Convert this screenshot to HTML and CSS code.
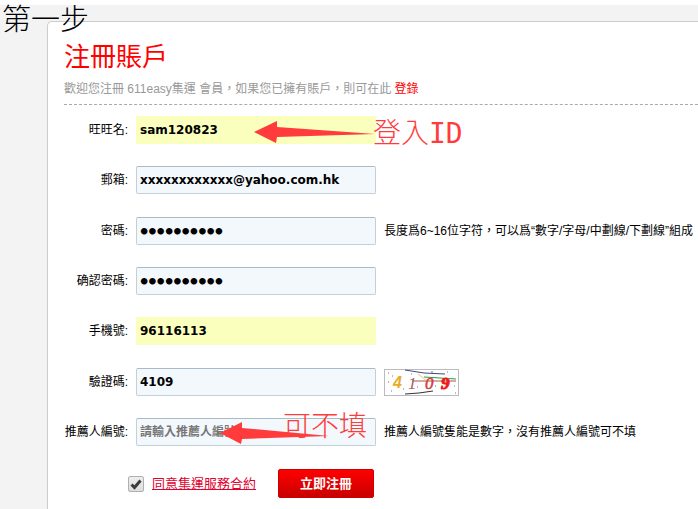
FILE: index.html
```html
<!DOCTYPE html>
<html lang="zh-Hant">
<head>
<meta charset="utf-8">
<meta name="viewport" content="width=device-width, initial-scale=1">
<title>注冊賬戶</title>
<link rel="stylesheet" href="styles.css">
</head>
<body>
<main class="page">
  <section class="panel">
    <header class="intro">
      <h1 class="title">注冊賬戶</h1>
      <p class="welcome">歡迎您注冊 611easy集運 會員，如果您已擁有賬戶，則可在此 <a class="login" href="#login">登錄</a></p>
    </header>
    <form class="form">
      <div class="group">
        <div class="row">
          <label class="label" for="user">旺旺名:</label>
          <div class="control">
            <input class="field filled" id="user" type="text" value="sam120823">
            <div class="note note-id">
              <svg class="arrow" viewBox="0 0 121 22" aria-hidden="true"><path d="M0 11 23 0V6L121 13 23 16 22 22Z"/></svg>
              <span class="note-text">登入<span class="latin">ID</span></span>
            </div>
          </div>
        </div>
        <div class="row">
          <label class="label" for="email">郵箱:</label>
          <div class="control"><input class="field" id="email" type="text" value="xxxxxxxxxxxx@yahoo.com.hk"></div>
        </div>
      </div>
      <div class="group">
        <div class="row">
          <label class="label" for="pass">密碼:</label>
          <div class="control"><input class="field secret" id="pass" type="password" value="0123456789"></div>
          <span class="hint">長度爲6~16位字符，可以爲“數字/字母/中劃線/下劃線”組成</span>
        </div>
        <div class="row">
          <label class="label" for="pass2">确認密碼:</label>
          <div class="control"><input class="field secret" id="pass2" type="password" value="0123456789"></div>
        </div>
        <div class="row">
          <label class="label" for="phone">手機號:</label>
          <div class="control"><input class="field filled" id="phone" type="text" value="96116113"></div>
        </div>
      </div>
      <div class="group">
        <div class="row">
          <label class="label" for="code">驗證碼:</label>
          <div class="control"><input class="field" id="code" type="text" value="4109"></div>
          <svg class="captcha" viewBox="0 0 75 27" role="img" aria-label="4109">
            <rect x=".5" y=".5" width="74" height="26" fill="#fff" stroke="#bbb"/>
            <g fill="none">
              <path d="M21 1 40 4 61 5" stroke="#448"/>
              <path d="M40 8 72 10" stroke="#393"/>
              <path d="M28 12 72 12" stroke="#a55"/>
              <path d="M34 5 43 12" stroke="#dc7"/>
              <path d="M21 25 35 24 49 22" stroke="#333"/>
              <path d="M47 3h2M8 7h1M4 13h1M7 22h1M57 20h1M70 17h1M63 3h1M27 5h1M33 18h1M51 17h1M71 24h1M19 20h1M4 4h1" stroke="#777"/>
            </g>
            <g font-family="Liberation Serif, serif" font-size="17" font-style="italic">
              <text x="9" y="19" fill="#e5ad28" font-family="Liberation Sans, sans-serif" font-size="16" font-weight="bold">4</text>
              <text x="24" y="20" fill="#a56060">1</text>
              <text x="41" y="20" fill="#d63a3a" stroke="#d63a3a" stroke-width=".5">0</text>
              <text x="57" y="20" fill="#f01818" stroke="#f01818" font-weight="bold">9</text>
            </g>
          </svg>
        </div>
        <div class="row">
          <label class="label" for="ref">推薦人編號:</label>
          <div class="control">
            <input class="field" id="ref" type="text" placeholder="請輸入推薦人編號">
            <div class="note note-skip">
              <svg class="arrow" viewBox="0 0 121 22" aria-hidden="true"><path d="M0 11 22 0V6L109 14 22 17 21 22Z"/></svg>
              <span class="note-text">可不填</span>
            </div>
          </div>
          <span class="hint">推薦人編號隻能是數字，沒有推薦人編號可不填</span>
        </div>
      </div>
      <div class="actions">
        <span class="tick">
          <input class="box" id="agree" type="checkbox" checked aria-label="同意集運服務合約">
          <svg class="mark" viewBox="0 0 16 16" aria-hidden="true"><path d="M3.5 8.5 6.5 11.5 12.5 4.5" fill="none" stroke="#3c3c3c" stroke-width="3"/></svg>
        </span>
        <a class="terms" href="#terms">同意集運服務合約</a>
        <button class="submit" type="submit">立即注冊</button>
      </div>
    </form>
  </section>
  <p class="step">第一步</p>
</main>
</body>
</html>
```
FILE: styles.css
```css
* { box-sizing: border-box; }

body {
  margin: 0;
  padding-top: 5px;
  background: #fff;
  color: #000;
  font: 12px/16px "Liberation Sans", "Noto Sans CJK TC", sans-serif;
}

.page {
  position: relative;
  min-height: calc(100vh - 5px);
  padding: 16px 0 0 47px;
  background: #f3f3f3;
  display: flex;
}

.step {
  position: absolute;
  left: 2px;
  top: -2px;
  margin: 0;
  font-size: 29px;
  font-weight: 300;
  line-height: 34px;
}

.panel {
  flex: 1;
  min-width: 0;
  padding: 18px 0 11px 16px;
  background: #fff;
  border: solid #ccc;
  border-width: 1px 0 0 1px;
  border-top-left-radius: 5px;
}

.intro {
  padding-bottom: 7px;
  border-bottom: 1px dashed #aaa;
}

.title {
  margin: 0 0 6px;
  color: #f00;
  font-size: 26px;
  font-weight: 400;
  line-height: 35px;
}

.welcome { margin: 0; color: #999; }
.login { color: #f00; text-decoration: none; }

.form { padding-top: 11px; }

.group {
  display: flex;
  flex-direction: column;
  gap: 22px;
  margin-bottom: 23px;
}

.row {
  display: flex;
  align-items: center;
  gap: 8px;
  white-space: nowrap;
}

.label { width: 64px; text-align: right; }
.control { position: relative; flex: 0 0 240px; }

.field {
  display: block;
  width: 100%;
  height: 28px;
  margin: 0;
  padding: 0 3px;
  border: 1px solid #c1d0db;
  border-top-color: #a9bac8;
  border-radius: 2px;
  background: #f3f8fd;
  color: #000;
  font: bold 12px/16px "DejaVu Sans", "Noto Sans CJK TC", sans-serif;
}

.field::placeholder { color: #777; }
.filled { border-color: #faffbd; border-radius: 0; background: #faffbd; }
.secret { font-size: 13px; -webkit-text-stroke: 2px #000; }

.captcha { width: 75px; height: 27px; }

.note {
  position: absolute;
  color: #ff3b3b;
  font-family: "Liberation Sans", "Noto Sans CJK TC", sans-serif;
  font-size: 28px;
  font-weight: 300;
  line-height: 32px;
  pointer-events: none;
}

.note-id { left: 118px; top: 5px; }
.note-skip { left: 84px; top: 4px; }
.arrow { display: block; width: 121px; height: 22px; fill: #ff3b3b; }
.note-text { position: absolute; top: -3px; left: 119px; }
.note-skip .note-text { top: -11px; left: 63px; }
.latin { font-family: "DejaVu Sans Mono", monospace; font-weight: 400; }

.actions {
  display: flex;
  align-items: center;
  padding-left: 64px;
}

.tick { position: relative; width: 16px; height: 16px; }

.box {
  appearance: none;
  display: block;
  width: 16px;
  height: 16px;
  margin: 0;
  border: 1px solid #b0b0b0;
  border-radius: 2px;
  background: linear-gradient(#eee, #ddd);
}

.mark {
  position: absolute;
  inset: 0;
  visibility: hidden;
  pointer-events: none;
}

.box:checked + .mark { visibility: visible; }

.terms { margin: 0 22px 0 8px; color: #e1002d; font-size: 13px; }

.submit {
  height: 29px;
  padding: 0 21px;
  border: 1px solid #c00;
  border-radius: 2px;
  background: linear-gradient(#f00, #c80000);
  color: #fff;
  font: bold 13px/16px "Liberation Sans", "Noto Sans CJK TC", sans-serif;
}
```
